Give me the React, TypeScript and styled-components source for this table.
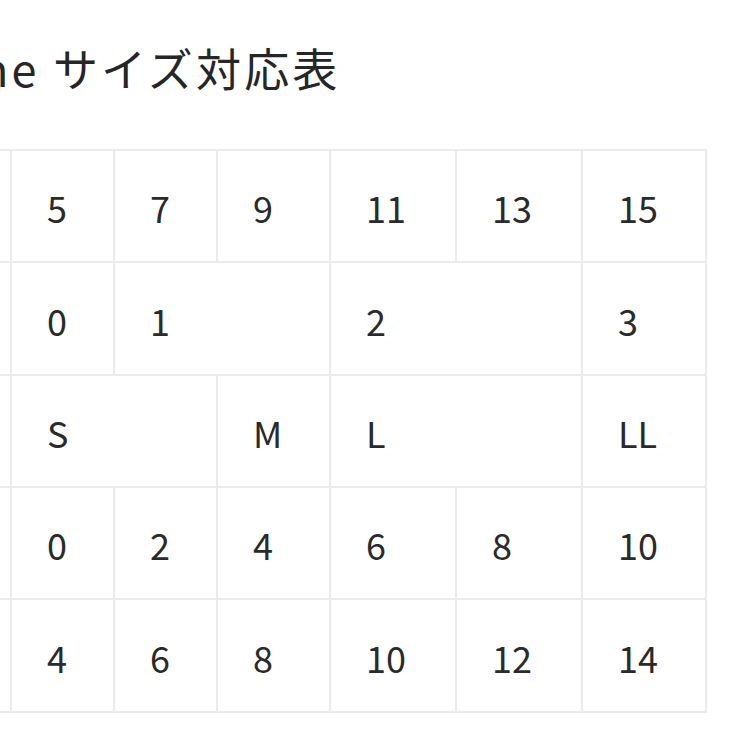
import { createGlobalStyle } from "styled-components";
import styled from "styled-components";

const GlobalStyle = createGlobalStyle`
  html, body {
    margin: 0;
    padding: 0;
    background: #fff;
    overflow: hidden;
  }
  body {
    font-family: "Noto Sans CJK JP", "Noto Sans", sans-serif;
    color: #2a2a2a;
  }
`;

const Page = styled.div`
  width: 738px;
  height: 738px;
  overflow: hidden;
  padding-top: 35px;
  box-sizing: border-box;
`;

const Title = styled.h2`
  margin: 0 0 49px -19px;
  font-size: 45px;
  font-weight: 400;
  line-height: normal;
  letter-spacing: 0.07em;
  white-space: nowrap;
  color: #262626;
`;

// the first (label) column lies off the left edge of the shot
const SizeGrid = styled.div`
  display: grid;
  grid-template-columns: 100px 101px 101px 111px 124px 124px 122px;
  grid-template-rows: 110px 111px 110px 110px 111px;
  gap: 2px;
  padding: 2px;
  background: #ebebeb;
  margin-left: -92px;
  width: max-content;
`;

const Cell = styled.div<{ $span?: number }>`
  grid-column: span ${(p) => p.$span ?? 1};
  background: #fff;
  display: flex;
  align-items: center;
  padding-left: 35px;
  padding-top: 2px;
  box-sizing: border-box;
  font-size: 36px;
  line-height: 1;
  color: #2a2a2a;
`;

type Row = { label: string; cells: [string, number][] };

const rows: Row[] = [
  {
    label: "",
    cells: [
      ["5", 1],
      ["7", 1],
      ["9", 1],
      ["11", 1],
      ["13", 1],
      ["15", 1],
    ],
  },
  {
    label: "",
    cells: [
      ["0", 1],
      ["1", 2],
      ["2", 2],
      ["3", 1],
    ],
  },
  {
    label: "",
    cells: [
      ["S", 2],
      ["M", 1],
      ["L", 2],
      ["LL", 1],
    ],
  },
  {
    label: "",
    cells: [
      ["0", 1],
      ["2", 1],
      ["4", 1],
      ["6", 1],
      ["8", 1],
      ["10", 1],
    ],
  },
  {
    label: "",
    cells: [
      ["4", 1],
      ["6", 1],
      ["8", 1],
      ["10", 1],
      ["12", 1],
      ["14", 1],
    ],
  },
];

const App = () => {
  return (
    <Page>
      <GlobalStyle />
      <Title>ne サイズ対応表</Title>
      <SizeGrid>
        {rows.map((row, i) => [
          <Cell key={`l${i}`}>{row.label}</Cell>,
          ...row.cells.map(([text, span], j) => (
            <Cell key={`${i}-${j}`} $span={span}>
              {text}
            </Cell>
          )),
        ])}
      </SizeGrid>
    </Page>
  );
};

export default App;
